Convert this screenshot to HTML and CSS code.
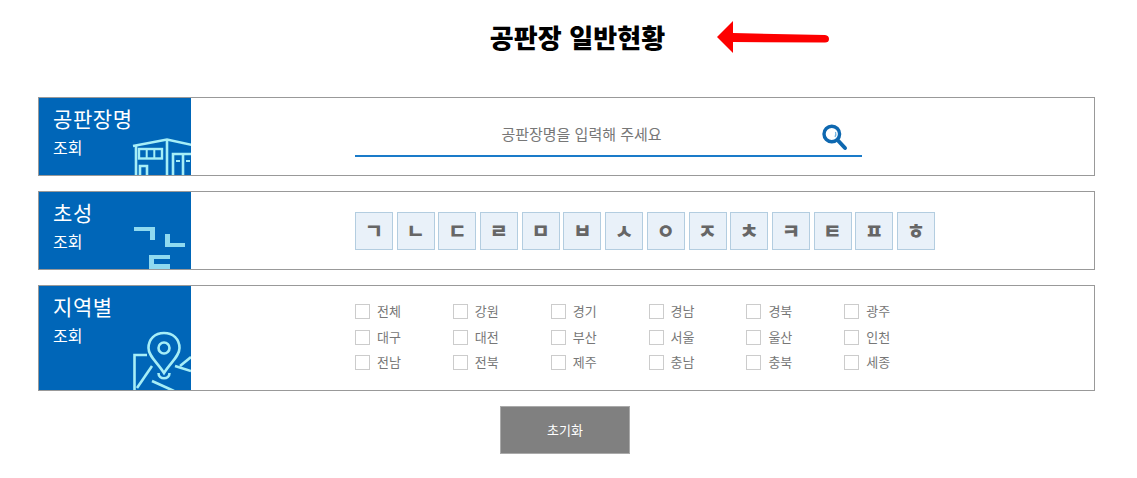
FILE: index.html
```html
<!DOCTYPE html>
<html lang="ko">
<head>
<meta charset="utf-8">
<title>공판장 일반현황</title>
<link rel="stylesheet" href="styles.css">
</head>
<body>
<header class="head">
  <h1 class="title">공판장 일반현황</h1>
  <svg class="arrow" width="130" height="50" viewBox="0 0 130 50">
    <path d="M0 22 L16 6 L16 18 L108 20 Q112 20.500 112 24 Q112 27.500 108 27.500 L16 27 L16 38 Z" fill="#fd0000"/>
  </svg>
</header>
<main class="panel">
  <section class="row row-search">
    <div class="label">
      <div class="label-main">공판장명</div>
      <div class="label-sub">조회</div>
      <svg class="deco" width="152" height="78" viewBox="0 0 152 78">
        <g fill="none" stroke="#a6eef7" stroke-width="2.600">
          <path d="M94 48 L128 41.500 L153 47"/>
          <path d="M97 78 V47"/>
          <path d="M128 41.500 V78"/>
          <rect x="100" y="51" width="23" height="9.500" stroke-width="2.400"/>
          <path d="M107.700 51 V60.500 M115.300 51 V60.500" stroke-width="2"/>
          <path d="M101 78 V68 H108 V78"/>
          <path d="M134 78 V56 H152"/>
          <path d="M144 56 V78"/>
          <path d="M137 63 H141 M147 63 H151" stroke-width="2"/>
        </g>
      </svg>
    </div>
    <div class="body body-search">
      <div class="search">
        <input class="search-input" type="text" placeholder="공판장명을 입력해 주세요">
        <svg class="search-icon" width="26" height="27" viewBox="0 0 26 27">
          <circle cx="9.800" cy="10" r="7.800" fill="#fff" stroke="#0e68b0" stroke-width="3.400"/>
          <path d="M13.500 8 Q14.500 10.500 13 13" fill="none" stroke="#6fb2e0" stroke-width="1.200"/>
          <path d="M16 16.500 L23 24" stroke="#0e68b0" stroke-width="4" stroke-linecap="round"/>
        </svg>
      </div>
    </div>
  </section>

  <section class="row row-search">
    <div class="label">
      <div class="label-main">초성</div>
      <div class="label-sub">조회</div>
      <svg class="deco" width="152" height="78" viewBox="0 0 152 78">
        <path d="M95 35 H116 V48 H111 V39 H95 Z M126 42 H131 V51 H146 V55 H126 Z M110 63 H131 V67 H115 V72 H131 V78 H110 Z" fill="#8fdaf0"/>
      </svg>
    </div>
    <div class="body body-initials">
      <div class="initials">
        <button class="initial" type="button">ㄱ</button>
        <button class="initial" type="button">ㄴ</button>
        <button class="initial" type="button">ㄷ</button>
        <button class="initial" type="button">ㄹ</button>
        <button class="initial" type="button">ㅁ</button>
        <button class="initial" type="button">ㅂ</button>
        <button class="initial" type="button">ㅅ</button>
        <button class="initial" type="button">ㅇ</button>
        <button class="initial" type="button">ㅈ</button>
        <button class="initial" type="button">ㅊ</button>
        <button class="initial" type="button">ㅋ</button>
        <button class="initial" type="button">ㅌ</button>
        <button class="initial" type="button">ㅍ</button>
        <button class="initial" type="button">ㅎ</button>
      </div>
    </div>
  </section>

  <section class="row row-region">
    <div class="label">
      <div class="label-main">지역별</div>
      <div class="label-sub">조회</div>
      <svg class="deco" width="152" height="105" viewBox="0 0 152 105">
        <g fill="none" stroke="#a6eef7" stroke-width="2.600">
          <path d="M125 47 C134 47 140.500 53 140.500 62 C140.500 70 132 76 125 87 C118 76 109.500 70 109.500 62 C109.500 53 116 47 125 47 Z"/>
          <circle cx="125" cy="62" r="5.500"/>
          <path d="M119.500 87 C119.500 94 130.500 94 130.500 87"/>
          <path d="M108 69 H95.500 V105"/>
          <path d="M98 102 L113 80"/>
          <path d="M113 95 L135 105"/>
          <path d="M136 80 L152 85"/>
          <path d="M152 71 L141 80"/>
        </g>
      </svg>
    </div>
    <div class="body body-region">
      <div class="regions">
        <label class="region"><input class="check" type="checkbox"><span>전체</span></label>
        <label class="region"><input class="check" type="checkbox"><span>강원</span></label>
        <label class="region"><input class="check" type="checkbox"><span>경기</span></label>
        <label class="region"><input class="check" type="checkbox"><span>경남</span></label>
        <label class="region"><input class="check" type="checkbox"><span>경북</span></label>
        <label class="region"><input class="check" type="checkbox"><span>광주</span></label>
        <label class="region"><input class="check" type="checkbox"><span>대구</span></label>
        <label class="region"><input class="check" type="checkbox"><span>대전</span></label>
        <label class="region"><input class="check" type="checkbox"><span>부산</span></label>
        <label class="region"><input class="check" type="checkbox"><span>서울</span></label>
        <label class="region"><input class="check" type="checkbox"><span>울산</span></label>
        <label class="region"><input class="check" type="checkbox"><span>인천</span></label>
        <label class="region"><input class="check" type="checkbox"><span>전남</span></label>
        <label class="region"><input class="check" type="checkbox"><span>전북</span></label>
        <label class="region"><input class="check" type="checkbox"><span>제주</span></label>
        <label class="region"><input class="check" type="checkbox"><span>충남</span></label>
        <label class="region"><input class="check" type="checkbox"><span>충북</span></label>
        <label class="region"><input class="check" type="checkbox"><span>세종</span></label>
      </div>
    </div>
  </section>

  <div class="actions">
    <button class="reset" type="button">초기화</button>
  </div>
</main>
</body>
</html>
```
FILE: styles.css
```css
* {
  box-sizing: border-box;
}

html,
body {
  margin: 0;
  padding: 0;
  background: #fff;
}

body {
  font-family: "Noto Sans CJK KR", "Noto Sans", sans-serif;
  width: 1137px;
  height: 478px;
  overflow: hidden;
}

.head {
  position: relative;
  height: 97px;
  display: flex;
  justify-content: center;
  padding-left: 18px;
  padding-top: 17px;
}

.title {
  margin: 0;
  font-size: 26px;
  line-height: 40px;
  font-weight: 900;
  letter-spacing: 0.1px;
  color: #000;
}

.arrow {
  position: absolute;
  left: 717px;
  top: 15px;
}

.panel {
  margin-left: 38px;
  width: 1057px;
}

.row {
  display: flex;
  border: 1px solid #999;
  margin-bottom: 15px;
}

.row-search {
  height: 79px;
}

.row-region {
  height: 106px;
}

.label {
  position: relative;
  flex: 0 0 152px;
  background: #0066b8;
  color: #fff;
  padding: 5px 0 0 14px;
  overflow: hidden;
}

.label-main {
  font-size: 21px;
  line-height: 30px;
  font-weight: 400;
  letter-spacing: 0.6px;
}

.label-sub {
  font-size: 16px;
  line-height: 24px;
  margin-top: 2px;
}

.deco {
  position: absolute;
  left: 0;
  top: 0;
}

.body {
  flex: 1;
  padding-left: 164px;
}

.search {
  position: relative;
  width: 507px;
  padding-top: 18px;
}

.search-input {
  display: block;
  width: 100%;
  height: 41px;
  border: 0;
  border-bottom: 2px solid #1a7bc9;
  outline: 0;
  padding: 0 54px 4px 0;
  text-align: center;
  font: inherit;
  font-size: 15px;
  background: transparent;
}

.search-input::placeholder {
  color: #777;
  opacity: 1;
}

.search-icon {
  position: absolute;
  left: 467px;
  top: 26px;
}

.initials {
  display: flex;
  gap: 3.700px;
  padding-top: 20px;
}

.initial {
  width: 38px;
  height: 38px;
  padding: 0 0 2px;
  border: 1px solid #b3cde0;
  background: #e9f1f9;
  color: #666;
  font: inherit;
  font-size: 20px;
  font-weight: 900;
}

.regions {
  display: grid;
  grid-template-columns: repeat(6, 97.850px);
  grid-template-rows: 26px 25px 25px;
  padding-top: 18px;
}

.region {
  display: flex;
  align-items: center;
  gap: 7px;
  height: 15px;
  font-size: 13px;
  line-height: 15px;
  color: #777;
}

.region span {
  margin-bottom: 2px;
}

.check {
  appearance: none;
  width: 15px;
  height: 15px;
  margin: 0;
  border: 1px solid #ccc;
  background: #fff;
  flex: none;
}

.actions {
  display: flex;
  justify-content: center;
  padding-right: 3px;
}

.reset {
  width: 130px;
  height: 48px;
  padding: 0 0 2px;
  border: 1px solid #aaa;
  background: #808080;
  color: #fff;
  font: inherit;
  font-size: 13px;
}
```
